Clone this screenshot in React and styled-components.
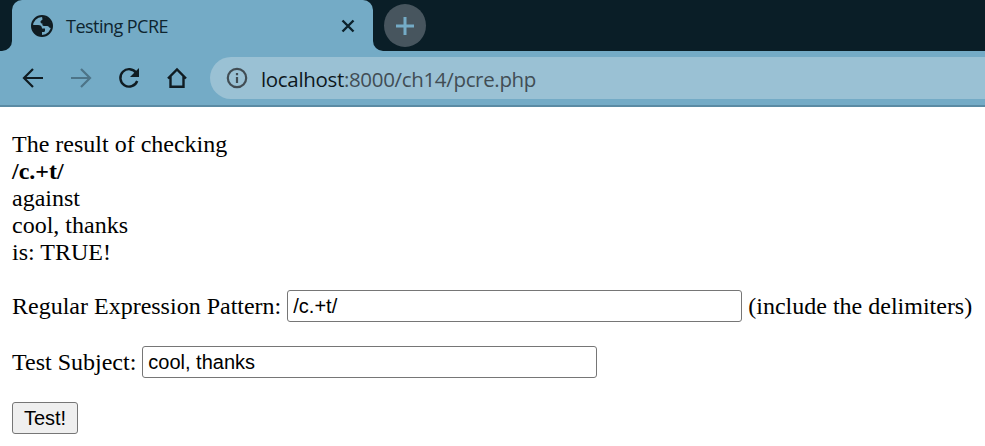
import React from "react";
import styled, { createGlobalStyle } from "styled-components";

const Global = createGlobalStyle`
  * { box-sizing: border-box; }
  body { margin: 0; background: #fff; overflow: hidden; }
`;

const Window = styled.div`
  height: 446px;
  overflow: hidden;
  background: #fff;
`;

const TabStrip = styled.div`
  display: flex;
  height: 51px;
  background: #74abc6;
`;

const StripEdge = styled.div`
  width: 12px;
  background: #0a1e27;
  border-bottom-right-radius: 10px;
`;

const TabBacking = styled.div`
  width: 361px;
  background: linear-gradient(#0a1e27 14px, #74abc6 14px);
`;

const Tab = styled.div`
  display: flex;
  align-items: center;
  height: 51px;
  padding: 0 17px 0 18px;
  background: #74abc6;
  border-radius: 10px 10px 0 0;
`;

const TabTitle = styled.span`
  flex: 1;
  margin-left: 12px;
  font: 18px/24px "Open Sans", sans-serif;
  letter-spacing: -0.53px;
  color: #0e2530;
`;

const StripRest = styled.div`
  flex: 1;
  padding: 4px 11px;
  background: #0a1e27;
  border-bottom-left-radius: 10px;
`;

const NewTab = styled.div`
  display: flex;
  align-items: center;
  justify-content: center;
  width: 42px;
  height: 43px;
  border-radius: 50%;
  background: #47555e;
`;

const Toolbar = styled.div`
  display: flex;
  height: 56px;
  padding: 6px 0 6px 21px;
  background: #74abc6;
  border-bottom: 2px solid #5b8ba4;
`;

const Nav = styled.div`
  display: flex;
  align-items: center;
  gap: 24px;
  width: 189px;
  height: 42px;
`;

const Address = styled.div`
  display: flex;
  align-items: center;
  flex: 1;
  height: 42px;
  padding-left: 15px;
  border-radius: 21px 0 0 21px;
  background: #9ac1d4;
`;

const Url = styled.span`
  margin: 2px 0 0 12px;
  font: 20.5px/28px "Open Sans", sans-serif;
  letter-spacing: -0.33px;
  color: #414d54;
`;

const Host = styled.span`
  color: #0d171c;
`;

const Icon = styled.svg`
  display: block;
  flex: none;
  fill: none;
  stroke: ${(p) => p.$color || "#101c22"};
  stroke-width: ${(p) => p.$weight || 2.2};
`;

const Page = styled.main`
  padding: 24px 12px 0;
  font: 24px/27px "Liberation Serif", serif;
  color: #000;
`;

const Result = styled.p`
  margin: 0 0 24px;
`;

const Field = styled.div`
  display: flex;
  align-items: center;
  gap: 6px;
  height: 32px;
  margin-bottom: 24px;
  line-height: 26px;
  white-space: nowrap;

  label, span { padding-bottom: 1px; }
`;

const Input = styled.input`
  width: 455px;
  height: 32px;
  padding: 1px 5px;
  border: 1px solid #767676;
  border-radius: 3px;
  outline: none;
  background: #fff;
  color: #000;
  font: 20px "Liberation Sans", sans-serif;
`;

const Submit = styled.button`
  display: block;
  width: 66px;
  height: 32px;
  padding: 0;
  border: 1px solid #767676;
  border-radius: 3px;
  background: #efefef;
  color: #000;
  font: 20px "Liberation Sans", sans-serif;
`;

const Globe = () => (
  <Icon width="24" height="24" viewBox="0 0 24 24" $weight={2}>
    <circle cx="12" cy="12" r="10" />
    <path
      fill="#101c22"
      stroke="none"
      d="M12 2.5C16 2.5 21.5 6 21.5 12C21.5 13 21 14 20.5 14C19 14 19 12 17 12H14C12.5 12 12 10.5 12.5 9.5C11 9.5 10.5 9 10.5 7.5C10.5 6.5 12 6.5 12.5 5.5ZM2.5 11H8C10.5 11 12 12 12 14.5H15V17C15 18 13.5 18 12 18V21.5C6 21.5 2.5 17 2.5 11Z"
    />
  </Icon>
);

export default function App() {
  return (
    <Window>
      <Global />
      <TabStrip>
        <StripEdge />
        <TabBacking>
          <Tab>
            <Globe />
            <TabTitle>Testing PCRE</TabTitle>
            <Icon width="16" height="16" viewBox="0 0 16 16" $color="#0c222c" $weight={2.4}>
              <path d="M2.5 2.5 13.5 13.5M13.5 2.5 2.5 13.5" />
            </Icon>
          </Tab>
        </TabBacking>
        <StripRest>
          <NewTab>
            <Icon width="20" height="20" viewBox="0 0 20 20" $color="#74abc6" $weight={3}>
              <path d="M10 1V19M1 10H19" />
            </Icon>
          </NewTab>
        </StripRest>
      </TabStrip>
      <Toolbar>
        <Nav>
          <Icon width="24" height="24" viewBox="0 0 24 24">
            <path d="M22 12H3.5M12 3 3 12 12 21" />
          </Icon>
          <Icon width="24" height="24" viewBox="0 0 24 24" $color="#4d7488">
            <path d="M2 12H20.5M12 3 21 12 12 21" />
          </Icon>
          <Icon width="24" height="24" viewBox="0 0 24 24" $weight={2.4}>
            <path d="M19.3 7A8.7 8.7 0 1 0 20.2 15" />
            <path fill="#101c22" stroke="none" d="M22 2V11H13Z" />
          </Icon>
          <Icon width="24" height="24" viewBox="0 0 24 24" $weight={2.4}>
            <path d="M3 12.5 12 3.5 21 12.5M5.5 10.5V20.8H18.5V10.5" />
          </Icon>
        </Nav>
        <Address>
          <Icon width="24" height="24" viewBox="0 0 24 24" $color="#414d54" $weight={2.2}>
            <circle cx="12" cy="12" r="9.2" />
            <path d="M12 11V17M12 7V9.2" />
          </Icon>
          <Url>
            <Host>localhost</Host>:8000/ch14/pcre.php
          </Url>
        </Address>
      </Toolbar>
      <Page>
        <Result>
          The result of checking
          <br />
          <b>/c.+t/</b>
          <br />
          against
          <br />
          cool, thanks
          <br />
          is: TRUE!
        </Result>
        <Field>
          <label htmlFor="pattern">Regular Expression Pattern:</label>
          <Input id="pattern" defaultValue="/c.+t/" />
          <span>(include the delimiters)</span>
        </Field>
        <Field>
          <label htmlFor="subject">Test Subject:</label>
          <Input id="subject" defaultValue="cool, thanks" />
        </Field>
        <Submit type="submit">Test!</Submit>
      </Page>
    </Window>
  );
}
